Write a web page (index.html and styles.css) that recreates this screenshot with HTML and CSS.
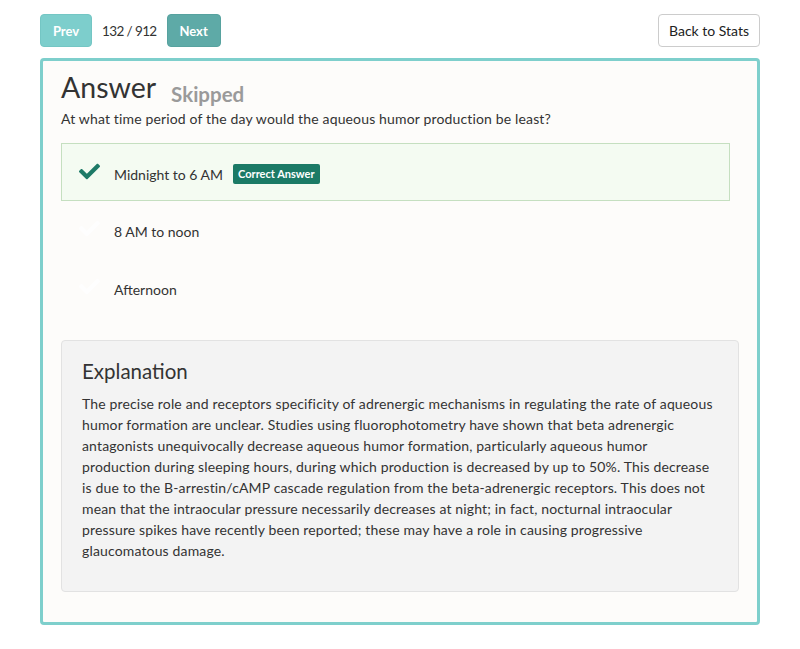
FILE: index.html
```html
<!DOCTYPE html>
<html>
<head>
<meta charset="utf-8">
<link rel="stylesheet" href="styles.css">
</head>
<body>
<div class="page">
  <div class="toolbar">
    <div class="nav">
      <button class="btn btn-prev">Prev</button>
      <span class="counter">132 / 912</span>
      <button class="btn btn-next">Next</button>
    </div>
    <button class="btn btn-back">Back to Stats</button>
  </div>
  <div class="card">
    <div class="title-row">
      <h1 class="title">Answer</h1>
      <span class="status">Skipped</span>
    </div>
    <p class="question">At what time period of the day would the aqueous humor production be least?</p>
    <ul class="options">
      <li class="option correct">
        <svg class="check" viewBox="0 0 512 512"><path d="M173.9 439.4l-166.4-166.4c-10-10-10-26.2 0-36.2l36.2-36.2c10-10 26.2-10 36.2 0L192 312.7 432.1 72.6c10-10 26.2-10 36.2 0l36.2 36.2c10 10 10 26.2 0 36.2l-294.4 294.4c-10 10-26.2 10-36.2 0z"/></svg>
        <span class="option-text">Midnight to 6 AM</span>
        <span class="badge">Correct Answer</span>
      </li>
      <li class="option">
        <svg class="check faint" viewBox="0 0 512 512"><path d="M173.9 439.4l-166.4-166.4c-10-10-10-26.2 0-36.2l36.2-36.2c10-10 26.2-10 36.2 0L192 312.7 432.1 72.6c10-10 26.2-10 36.2 0l36.2 36.2c10 10 10 26.2 0 36.2l-294.4 294.4c-10 10-26.2 10-36.2 0z"/></svg>
        <span class="option-text">8 AM to noon</span>
      </li>
      <li class="option">
        <svg class="check faint" viewBox="0 0 512 512"><path d="M173.9 439.4l-166.4-166.4c-10-10-10-26.2 0-36.2l36.2-36.2c10-10 26.2-10 36.2 0L192 312.7 432.1 72.6c10-10 26.2-10 36.2 0l36.2 36.2c10 10 10 26.2 0 36.2l-294.4 294.4c-10 10-26.2 10-36.2 0z"/></svg>
        <span class="option-text">Afternoon</span>
      </li>
    </ul>
    <div class="explanation">
      <h3 class="exp-title">Explanation</h3>
      <p class="exp-text">The precise role and receptors specificity of adrenergic mechanisms in regulating the rate of aqueous humor formation are unclear. Studies using fluorophotometry have shown that beta adrenergic antagonists unequivocally decrease aqueous humor formation, particularly aqueous humor production during sleeping hours, during which production is decreased by up to 50%. This decrease is due to the B-arrestin/cAMP cascade regulation from the beta-adrenergic receptors. This does not mean that the intraocular pressure necessarily decreases at night; in fact, nocturnal intraocular pressure spikes have recently been reported; these may have a role in causing progressive glaucomatous damage.</p>
    </div>
  </div>
</div>
</body>
</html>
```

FILE: styles.css
```css
* { box-sizing: border-box; }
html, body { margin: 0; padding: 0; background: #ffffff; }
body {
  font-family: Lato, "Open Sans", sans-serif;
  color: #333333;
  font-size: 14px;
}
.page {
  width: 720px;
  margin: 0 auto;
  padding-top: 14px;
}
.toolbar {
  display: flex;
  justify-content: space-between;
  align-items: center;
  height: 33px;
}
.nav {
  display: flex;
  align-items: center;
  gap: 10px;
}
.btn {
  font-family: Lato, sans-serif;
  height: 33px;
  border-radius: 4px;
  border: 1px solid transparent;
  font-size: 13px;
  cursor: pointer;
  padding: 0;
}
.btn-prev {
  width: 52px;
  background: #7dcecc;
  border-color: #74c6c4;
  color: #ffffff;
  font-weight: bold;
}
.btn-next {
  width: 54px;
  background: #5eaaa7;
  border-color: #57a29f;
  color: #ffffff;
  font-weight: bold;
}
.counter {
  font-size: 13.5px;
  letter-spacing: -0.6px;
  color: #333;
}
.btn-back {
  width: 102px;
  background: #ffffff;
  border-color: #cccccc;
  color: #222;
  font-size: 14px;
}
.card {
  margin-top: 11px;
  border: 3px solid #7ecfcc;
  border-radius: 4px;
  background: #fdfcfa;
  padding: 8px 18px 30px 18px;
}
.title-row {
  display: flex;
  align-items: baseline;
  gap: 15px;
}
.title {
  margin: 0;
  font-size: 28.5px;
  font-weight: normal;
  line-height: 36px;
  color: #333;
}
.status {
  font-size: 20.5px;
  font-weight: bold;
  color: #9a9a9a;
  position: relative;
  top: 4px;
}
.question {
  margin: 4px 0 14px 0;
  line-height: 20px;
  letter-spacing: 0.15px;
}
.options {
  list-style: none;
  margin: 0 9px 24px 0;
  padding: 0;
}
.option {
  display: flex;
  align-items: center;
  height: 57.5px;
  padding: 4px 17px 0 17px;
  border: 1px solid transparent;
}
.option.correct {
  background: #f4fbf2;
  border-color: #c5dfc0;
  height: 58px;
}
.check {
  width: 21px;
  height: 21px;
  fill: #1d7a67;
  margin-right: 14px;
  position: relative;
  top: -3px;
}
.check.faint { fill: #fefefe; }
.option-text {
  font-size: 14px;
  color: #333;
}
.badge {
  display: inline-block;
  margin-left: 10px;
  background: #1b7a66;
  color: #ffffff;
  font-size: 11px;
  font-weight: bold;
  padding: 3px 5px;
  border-radius: 2px;
  line-height: 14px;
}
.explanation {
  background: #f3f3f3;
  border: 1px solid #e2e2e2;
  border-radius: 4px;
  padding: 17px 20px 30px 20px;
}
.exp-title {
  margin: 0 0 9px 0;
  font-size: 20.5px;
  font-weight: normal;
  line-height: 26px;
  color: #333;
}
.exp-text {
  margin: 0;
  line-height: 21px;
  font-size: 14px;
  letter-spacing: 0.15px;
}
```
